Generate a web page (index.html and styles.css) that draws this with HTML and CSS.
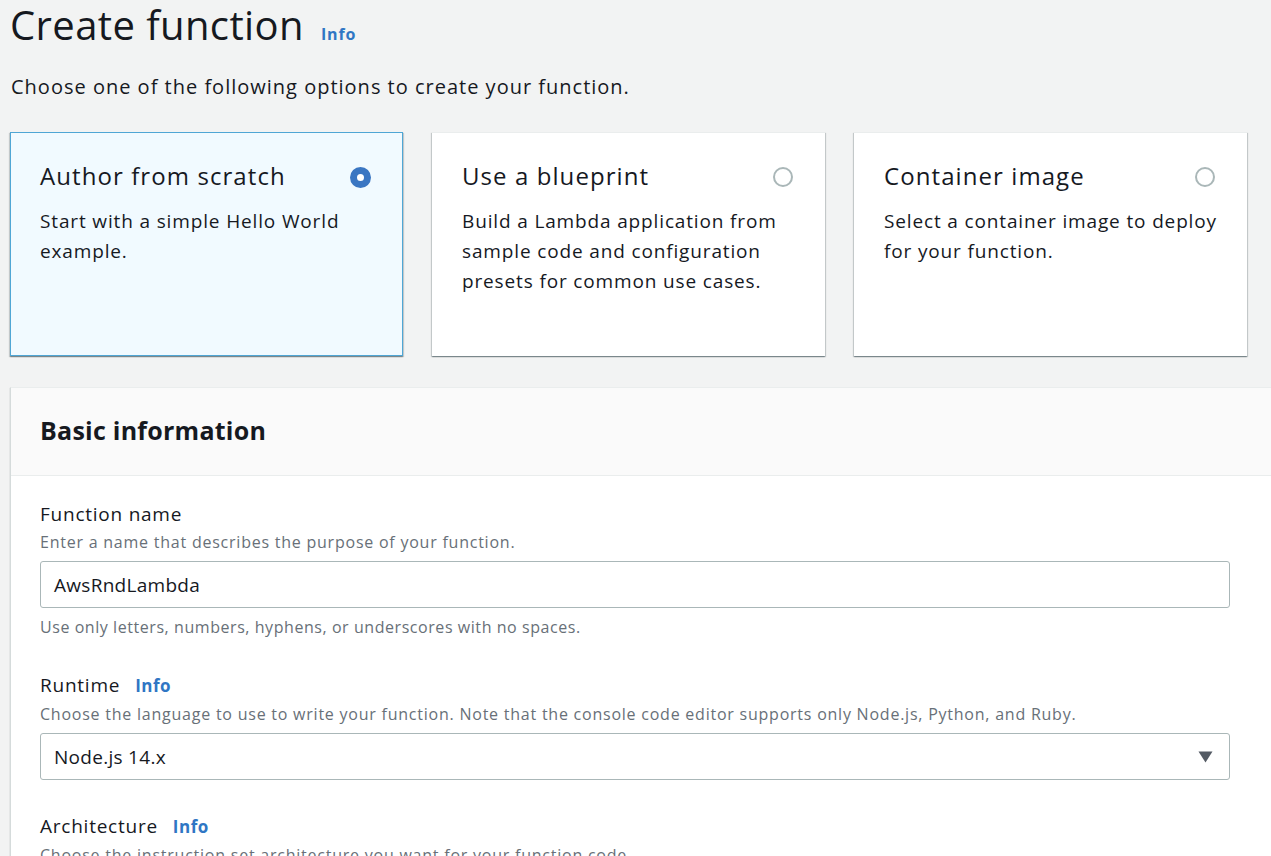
FILE: index.html
```html
<!DOCTYPE html>
<html lang="en">
<head>
<meta charset="utf-8">
<title>Create function</title>
<link rel="stylesheet" href="styles.css">
</head>
<body>
<div class="page">
  <header class="page-header">
    <h1 class="page-title">Create function</h1>
    <a class="info-link info-title" href="#">Info</a>
  </header>
  <p class="page-desc">Choose one of the following options to create your function.</p>

  <div class="options">
    <div class="option selected">
      <div class="option-head">
        <span class="option-title">Author from scratch</span>
        <span class="radio checked"></span>
      </div>
      <p class="option-desc">Start with a simple Hello World example.</p>
    </div>
    <div class="option">
      <div class="option-head">
        <span class="option-title">Use a blueprint</span>
        <span class="radio"></span>
      </div>
      <p class="option-desc">Build a Lambda application from sample code and configuration presets for common use cases.</p>
    </div>
    <div class="option">
      <div class="option-head">
        <span class="option-title">Container image</span>
        <span class="radio"></span>
      </div>
      <p class="option-desc">Select a container image to deploy for your function.</p>
    </div>
  </div>

  <section class="panel">
    <div class="panel-header">
      <h2 class="panel-title">Basic information</h2>
    </div>
    <div class="panel-body">
      <div class="field">
        <div class="field-label">Function name</div>
        <div class="field-desc">Enter a name that describes the purpose of your function.</div>
        <div class="input">AwsRndLambda</div>
        <div class="field-constraint">Use only letters, numbers, hyphens, or underscores with no spaces.</div>
      </div>
      <div class="field">
        <div class="field-label">Runtime <a class="info-link" href="#">Info</a></div>
        <div class="field-desc">Choose the language to use to write your function. Note that the console code editor supports only Node.js, Python, and Ruby.</div>
        <div class="input select">
          <span>Node.js 14.x</span>
          <svg class="caret" width="15" height="12" viewBox="0 0 15 12"><path d="M0.5 0.5 H14.5 L7.5 11.5 Z" fill="#545b64"/></svg>
        </div>
      </div>
      <div class="field field-last">
        <div class="field-label">Architecture <a class="info-link" href="#">Info</a></div>
        <div class="field-desc">Choose the instruction set architecture you want for your function code.</div>
      </div>
    </div>
  </section>
</div>
</body>
</html>
```

FILE: styles.css
```css
html, body {
  margin: 0;
  padding: 0;
  background: #f2f3f3;
  overflow: hidden;
}

body {
  font-family: "Open Sans", "Noto Sans", sans-serif;
  color: #16191f;
  letter-spacing: 0.045em;
}

.page {
  padding: 0 0 0 10px;
  width: 1300px;
}

.page-header {
  display: flex;
  align-items: baseline;
  gap: 17px;
  height: 50px;
}

.page-title {
  margin: 0;
  font-size: 40px;
  font-weight: 400;
  line-height: 50px;
  letter-spacing: 0.4px;
}

.info-link {
  color: #2f76c4;
  font-weight: 700;
  text-decoration: none;
  font-size: 16px;
  letter-spacing: 0.05em;
}

.page-desc {
  margin: 23px 0 0 1px;
  font-size: 20px;
  line-height: 28px;
  letter-spacing: 0.05em;
}

.options {
  display: flex;
  gap: 29px;
  width: 1237px;
  margin-top: 31px;
}

.option {
  flex: 1;
  height: 224px;
  box-sizing: border-box;
  background: #ffffff;
  border-top: 1px solid #eaeded;
  padding: 27px 30px 0 30px;
  box-shadow: 0 1px 1px 0 rgba(0, 28, 36, 0.3), 1px 1px 1px 0 rgba(0, 28, 36, 0.15), -1px 1px 1px 0 rgba(0, 28, 36, 0.15);
}

.option.selected {
  background: #f1faff;
  border: 1px solid #4fa6d5;
  padding: 27px 29px 0 29px;
}

.option-head {
  display: flex;
  justify-content: space-between;
  align-items: center;
  height: 32px;
}

.option-title {
  font-size: 24px;
  line-height: 32px;
  letter-spacing: 0.045em;
}

.radio {
  width: 20px;
  height: 20px;
  box-sizing: border-box;
  border-radius: 50%;
  border: 2px solid #aab7b8;
  background: #fff;
  margin-right: 2px;
  margin-top: 2px;
}

.radio.checked {
  border: 7px solid #3a76c2;
  width: 21px;
  height: 21px;
}

.option-desc {
  margin: 14px 0 0 0;
  font-size: 19px;
  line-height: 30px;
  letter-spacing: 0.045em;
}

.panel {
  margin-top: 31px;
  background: #ffffff;
  border-top: 1px solid #eaeded;
  border-left: 1px solid #d5dbdb;
  box-shadow: 0 1px 1px 0 rgba(0, 28, 36, 0.3);
}

.panel-header {
  background: #fafafa;
  border-bottom: 1px solid #eaeded;
  height: 88px;
  box-sizing: border-box;
  padding: 0 29px 3px;
  display: flex;
  align-items: center;
}

.panel-title {
  margin: 0;
  font-size: 25px;
  font-weight: 700;
  line-height: 32px;
  letter-spacing: 0.01em;
}

.panel-body {
  padding: 24px 29px 40px;
}

.field + .field {
  margin-top: 31px;
}

.field-last {
  padding-top: 1px;
}

.field-label {
  font-size: 19px;
  line-height: 28px;
  display: flex;
  align-items: baseline;
  gap: 15px;
  letter-spacing: 0.04em;
}

.field-label .info-link {
  font-size: 17px;
  letter-spacing: 0.03em;
}

.field-desc {
  font-size: 16px;
  line-height: 28px;
  color: #687078;
  letter-spacing: 0.048em;
}

.input {
  margin-top: 5px;
  width: 1190px;
  height: 47px;
  box-sizing: border-box;
  border: 1px solid #aab7b8;
  border-radius: 3px;
  background: #fff;
  padding: 0 13px;
  font-size: 19px;
  display: flex;
  align-items: center;
  letter-spacing: 0.015em;
}

.select {
  justify-content: space-between;
  padding-right: 16px;
}

.caret {
  display: block;
}

.field-constraint {
  margin-top: 6px;
  font-size: 16px;
  line-height: 26px;
  color: #687078;
  letter-spacing: 0.035em;
}
```
